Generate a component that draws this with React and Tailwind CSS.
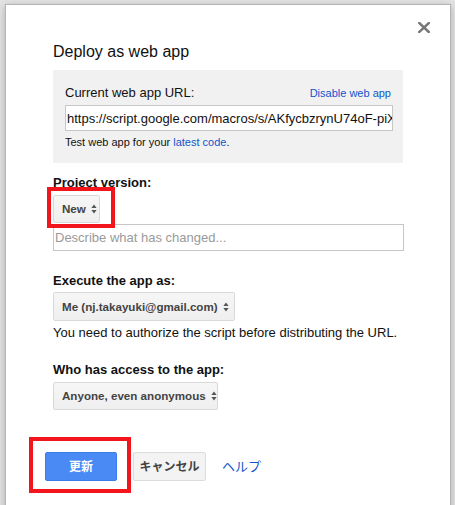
import React from 'react';

const font = { fontFamily: '"Liberation Sans", Arial, "Noto Sans CJK JP", sans-serif' };

// 上下の小さな三角（セレクトの矢印）
const SelectArrows = () => (
  <svg width="6" height="10" viewBox="0 0 6 10" className="ml-[5px] shrink-0">
    <path d="M3 0.5L5.6 4H0.4z" fill="#555" />
    <path d="M3 9.5L5.6 6H0.4z" fill="#555" />
  </svg>
);

const FakeSelect = ({ label, className = '' }) => (
  <div
    className={`flex items-center justify-between whitespace-nowrap rounded-[2px] border border-[#d9d9d9] bg-gradient-to-b from-[#f6f6f6] to-[#efefef] pl-[8px] pr-[6px] text-[11.6px] font-bold text-[#444] ${className}`}
  >
    <span className="leading-none">{label}</span>
    <SelectArrows />
  </div>
);

export default function App() {
  return (
    <div className="relative h-[505px] w-[455px] overflow-hidden bg-[#e4e4e4] pl-[5px] pr-[4px] pt-[4px]" style={font}>
      {/* ダイアログ */}
      <div className="relative h-[510px] border border-[#b4b4b4] bg-white px-[47px] pt-[36px] shadow-[0_2px_8px_rgba(0,0,0,0.25)]">
        <button className="absolute right-[19px] top-[16px] p-[1px]" aria-label="close">
          <svg width="12" height="11" viewBox="0 0 12 11">
            <path d="M1.2 1L10.8 10M10.8 1L1.2 10" stroke="#777" strokeWidth="2.4" strokeLinecap="square" />
          </svg>
        </button>

        <h1 className="text-[16px] leading-[22px] text-[#111]">Deploy as web app</h1>

        {/* 現在の URL */}
        <div className="mt-[7px] w-[350px] bg-[#f1f1f1] pb-[13px] pl-[12px] pr-[10px] pt-[15px]">
          <div className="flex items-center justify-between">
            <span className="text-[13px] leading-[16px] text-[#111]">Current web app URL:</span>
            <a className="mr-[2px] text-[11px] leading-[16px] text-[#1155cc]">Disable web app</a>
          </div>
          <input
            readOnly
            value="https://script.google.com/macros/s/AKfycbzrynU74oF-piXqZ8uFm3/exec"
            className="mt-[4px] block h-[26px] w-full border border-[#c6c6c6] bg-white pl-[1px] text-[13px] text-[#111] outline-none"
            style={font}
          />
          <p className="mt-[3px] text-[11px] leading-[16px] text-[#111]">
            Test web app for your <a className="text-[#1155cc]">latest code</a>.
          </p>
        </div>

        {/* プロジェクトのバージョン */}
        <p className="mt-[12px] text-[13px] font-bold leading-[16px] text-[#111]">Project version:</p>
        <FakeSelect label="New" className="mt-[4px] h-[28px] w-[47px]" />
        <input
          placeholder="Describe what has changed..."
          className="mt-[1px] block h-[27px] w-[351px] border border-[#c6c6c6] px-[1px] text-[13px] text-[#222] outline-none placeholder:text-[#9a9a9a]"
          style={font}
        />

        <p className="mt-[22px] text-[13px] font-bold leading-[16px] text-[#111]">Execute the app as:</p>
        <FakeSelect label="Me (nj.takayuki@gmail.com)" className="mt-[3px] h-[29px] w-[182px]" />
        <p className="mt-[4px] text-[13px] leading-[16px] text-[#111]">
          You need to authorize the script before distributing the URL.
        </p>

        <p className="mt-[21px] text-[13px] font-bold leading-[16px] text-[#111]">Who has access to the app:</p>
        <FakeSelect label="Anyone, even anonymous" className="mt-[4px] h-[28px] w-[165px]" />

        {/* ボタン */}
        <div className="-ml-[8px] mt-[42px] flex items-center">
          <button className="h-[29px] w-[72px] rounded-[2px] border border-[#3b7de9] bg-[#4a8af4] text-[12px] font-bold text-white">
            更新
          </button>
          <button className="ml-[16px] h-[29px] w-[73px] rounded-[2px] border border-[#dcdcdc] bg-[#f3f3f3] text-[12px] font-bold text-[#444]">
            キャンセル
          </button>
          <a className="ml-[16px] text-[13px] text-[#1155cc]">ヘルプ</a>
        </div>
      </div>

      {/* 赤い注釈枠 */}
      <div className="pointer-events-none absolute left-[47px] top-[187px] h-[41px] w-[68px] border-[4px] border-[#f2161c]" />
      <div className="pointer-events-none absolute left-[29px] top-[437px] h-[56px] w-[102px] border-[4px] border-[#f2161c]" />
    </div>
  );
}
